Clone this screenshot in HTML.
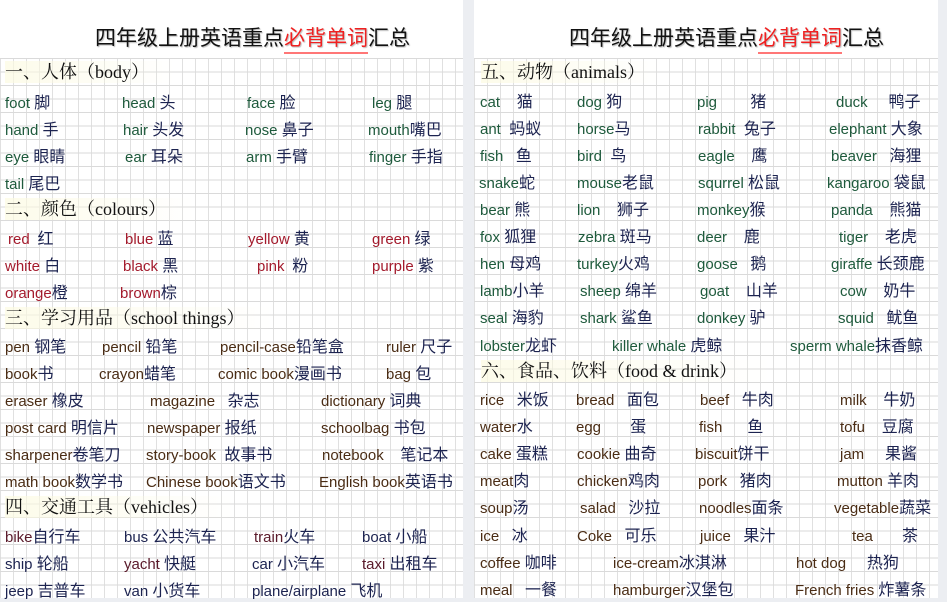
<!DOCTYPE html>
<html><head><meta charset="utf-8"><style>
body{margin:0;width:947px;height:588px;overflow:hidden;background:#eceef2;position:relative;font-family:"Liberation Sans","Noto Sans CJK SC",sans-serif}
.pg{position:absolute;top:0;height:588px;background:#fff}
.grid{position:absolute;top:58px;height:540px;background-color:#fff;
background-image:linear-gradient(#dadada 1px,transparent 1px),linear-gradient(90deg,#e0e0e0 1px,transparent 1px);
background-size:13px 13.5px;background-position:0 0}
.t{position:absolute;top:22px;font-size:21px;color:#111;font-family:"Noto Sans CJK SC",sans-serif;text-shadow:1px 1px 1px #bbb;white-space:nowrap}
.t b{color:#f02020;font-weight:normal;border-bottom:2px solid #f77}
.h{position:absolute;font-size:18px;color:#111;font-family:"Liberation Serif","Noto Serif CJK SC",serif;white-space:nowrap;line-height:22px;background:linear-gradient(90deg,rgba(252,250,225,.7),rgba(255,255,255,0))}
.w{position:absolute;font-size:15px;line-height:20px;white-space:nowrap}
.w i{font-style:normal;color:#1c2350;font-size:16px;font-family:"Noto Sans CJK SC",sans-serif}
.g{color:#1e5a3c}.r{color:#a31a2c}.b{color:#4a2c14}.m{color:#5a1a2a}.n{color:#1c2350}
</style></head><body>
<div class="pg" style="left:0;width:463px"></div>
<div class="grid" style="left:0;width:463px"></div>
<div class="pg" style="left:474px;width:464px"></div>
<div class="grid" style="left:474px;width:464px"></div>

<div class="t" style="left:95px">四年级上册英语重点<b>必背单词</b>汇总</div>
<div class="t" style="left:569px">四年级上册英语重点<b>必背单词</b>汇总</div>

<div class="h" style="left:5px;top:61px;width:170px">一、人体（body）</div>
<div class="w g" style="left:5px;top:91px">foot <i>脚</i></div>
<div class="w g" style="left:122px;top:91px">head <i>头</i></div>
<div class="w g" style="left:247px;top:91px">face <i>脸</i></div>
<div class="w g" style="left:372px;top:91px">leg <i>腿</i></div>
<div class="w g" style="left:5px;top:118px">hand <i>手</i></div>
<div class="w g" style="left:123px;top:118px">hair <i>头发</i></div>
<div class="w g" style="left:245px;top:118px">nose <i>鼻子</i></div>
<div class="w g" style="left:368px;top:118px">mouth<i>嘴巴</i></div>
<div class="w g" style="left:5px;top:145px">eye <i>眼睛</i></div>
<div class="w g" style="left:125px;top:145px">ear <i>耳朵</i></div>
<div class="w g" style="left:246px;top:145px">arm <i>手臂</i></div>
<div class="w g" style="left:369px;top:145px">finger <i>手指</i></div>
<div class="w g" style="left:5px;top:172px">tail <i>尾巴</i></div>

<div class="h" style="left:5px;top:198px;width:190px">二、颜色（colours）</div>
<div class="w r" style="left:8px;top:227px">red <i>&nbsp;红</i></div>
<div class="w r" style="left:125px;top:227px">blue <i>蓝</i></div>
<div class="w r" style="left:248px;top:227px">yellow <i>黄</i></div>
<div class="w r" style="left:372px;top:227px">green <i>绿</i></div>
<div class="w r" style="left:5px;top:254px">white <i>白</i></div>
<div class="w r" style="left:123px;top:254px">black <i>黑</i></div>
<div class="w r" style="left:257px;top:254px">pink <i>&nbsp;粉</i></div>
<div class="w r" style="left:372px;top:254px">purple <i>紫</i></div>
<div class="w r" style="left:5px;top:281px">orange<i>橙</i></div>
<div class="w r" style="left:120px;top:281px">brown<i>棕</i></div>

<div class="h" style="left:5px;top:307px;width:270px">三、学习用品（school things）</div>
<div class="w b" style="left:5px;top:335px">pen <i>钢笔</i></div>
<div class="w b" style="left:102px;top:335px">pencil <i>铅笔</i></div>
<div class="w b" style="left:220px;top:335px">pencil-case<i>铅笔盒</i></div>
<div class="w b" style="left:386px;top:335px">ruler <i>尺子</i></div>
<div class="w b" style="left:5px;top:362px">book<i>书</i></div>
<div class="w b" style="left:99px;top:362px">crayon<i>蜡笔</i></div>
<div class="w b" style="left:218px;top:362px">comic book<i>漫画书</i></div>
<div class="w b" style="left:386px;top:362px">bag <i>包</i></div>
<div class="w b" style="left:5px;top:389px">eraser <i>橡皮</i></div>
<div class="w b" style="left:150px;top:389px">magazine&nbsp;&nbsp; <i>杂志</i></div>
<div class="w b" style="left:321px;top:389px">dictionary <i>词典</i></div>
<div class="w b" style="left:5px;top:416px">post card <i>明信片</i></div>
<div class="w b" style="left:147px;top:416px">newspaper <i>报纸</i></div>
<div class="w b" style="left:321px;top:416px">schoolbag <i>书包</i></div>
<div class="w b" style="left:5px;top:443px">sharpener<i>卷笔刀</i></div>
<div class="w b" style="left:146px;top:443px">story-book&nbsp; <i>故事书</i></div>
<div class="w b" style="left:322px;top:443px">notebook&nbsp;&nbsp;&nbsp; <i>笔记本</i></div>
<div class="w b" style="left:5px;top:470px">math book<i>数学书</i></div>
<div class="w b" style="left:146px;top:470px">Chinese book<i>语文书</i></div>
<div class="w b" style="left:319px;top:470px">English book<i>英语书</i></div>

<div class="h" style="left:5px;top:496px;width:230px">四、交通工具（vehicles）</div>
<div class="w m" style="left:5px;top:525px">bike<i>自行车</i></div>
<div class="w n" style="left:124px;top:525px">bus <i>公共汽车</i></div>
<div class="w m" style="left:254px;top:525px">train<i>火车</i></div>
<div class="w n" style="left:362px;top:525px">boat <i>小船</i></div>
<div class="w n" style="left:5px;top:552px">ship <i>轮船</i></div>
<div class="w m" style="left:124px;top:552px">yacht <i>快艇</i></div>
<div class="w n" style="left:252px;top:552px">car <i>小汽车</i></div>
<div class="w m" style="left:362px;top:552px">taxi <i>出租车</i></div>
<div class="w n" style="left:5px;top:579px">jeep <i>吉普车</i></div>
<div class="w n" style="left:124px;top:579px">van <i>小货车</i></div>
<div class="w n" style="left:252px;top:579px">plane/airplane <i>飞机</i></div>

<div class="h" style="left:481px;top:61px;width:180px">五、动物（animals）</div>
<div class="w g" style="left:480px;top:90px">cat&nbsp;&nbsp;&nbsp; <i>猫</i></div>
<div class="w g" style="left:577px;top:90px">dog <i>狗</i></div>
<div class="w g" style="left:697px;top:90px">pig&nbsp;&nbsp;&nbsp;&nbsp;&nbsp;&nbsp;&nbsp; <i>猪</i></div>
<div class="w g" style="left:836px;top:90px">duck&nbsp;&nbsp;&nbsp;&nbsp; <i>鸭子</i></div>
<div class="w g" style="left:480px;top:117px">ant&nbsp; <i>蚂蚁</i></div>
<div class="w g" style="left:577px;top:117px">horse<i>马</i></div>
<div class="w g" style="left:698px;top:117px">rabbit&nbsp; <i>兔子</i></div>
<div class="w g" style="left:829px;top:117px">elephant <i>大象</i></div>
<div class="w g" style="left:480px;top:144px">fish&nbsp;&nbsp; <i>鱼</i></div>
<div class="w g" style="left:577px;top:144px">bird&nbsp; <i>鸟</i></div>
<div class="w g" style="left:698px;top:144px">eagle&nbsp;&nbsp;&nbsp; <i>鹰</i></div>
<div class="w g" style="left:831px;top:144px">beaver&nbsp;&nbsp; <i>海狸</i></div>
<div class="w g" style="left:479px;top:171px">snake<i>蛇</i></div>
<div class="w g" style="left:577px;top:171px">mouse<i>老鼠</i></div>
<div class="w g" style="left:698px;top:171px">squrrel <i>松鼠</i></div>
<div class="w g" style="left:827px;top:171px">kangaroo <i>袋鼠</i></div>
<div class="w g" style="left:480px;top:198px">bear <i>熊</i></div>
<div class="w g" style="left:577px;top:198px">lion&nbsp;&nbsp;&nbsp; <i>狮子</i></div>
<div class="w g" style="left:697px;top:198px">monkey<i>猴</i></div>
<div class="w g" style="left:831px;top:198px">panda&nbsp;&nbsp;&nbsp; <i>熊猫</i></div>
<div class="w g" style="left:480px;top:225px">fox <i>狐狸</i></div>
<div class="w g" style="left:578px;top:225px">zebra <i>斑马</i></div>
<div class="w g" style="left:697px;top:225px">deer&nbsp;&nbsp;&nbsp; <i>鹿</i></div>
<div class="w g" style="left:839px;top:225px">tiger&nbsp;&nbsp;&nbsp; <i>老虎</i></div>
<div class="w g" style="left:480px;top:252px">hen <i>母鸡</i></div>
<div class="w g" style="left:577px;top:252px">turkey<i>火鸡</i></div>
<div class="w g" style="left:697px;top:252px">goose&nbsp;&nbsp; <i>鹅</i></div>
<div class="w g" style="left:831px;top:252px">giraffe <i>长颈鹿</i></div>
<div class="w g" style="left:480px;top:279px">lamb<i>小羊</i></div>
<div class="w g" style="left:580px;top:279px">sheep <i>绵羊</i></div>
<div class="w g" style="left:700px;top:279px">goat&nbsp;&nbsp;&nbsp; <i>山羊</i></div>
<div class="w g" style="left:840px;top:279px">cow&nbsp;&nbsp;&nbsp; <i>奶牛</i></div>
<div class="w g" style="left:480px;top:306px">seal <i>海豹</i></div>
<div class="w g" style="left:580px;top:306px">shark <i>鲨鱼</i></div>
<div class="w g" style="left:697px;top:306px">donkey <i>驴</i></div>
<div class="w g" style="left:838px;top:306px">squid&nbsp;&nbsp; <i>鱿鱼</i></div>
<div class="w g" style="left:480px;top:334px">lobster<i>龙虾</i></div>
<div class="w g" style="left:612px;top:334px">killer whale <i>虎鲸</i></div>
<div class="w g" style="left:790px;top:334px">sperm whale<i>抹香鲸</i></div>

<div class="h" style="left:481px;top:360px;width:290px">六、食品、饮料（food &amp; drink）</div>
<div class="w b" style="left:480px;top:388px">rice&nbsp;&nbsp; <i>米饭</i></div>
<div class="w b" style="left:576px;top:388px">bread&nbsp;&nbsp; <i>面包</i></div>
<div class="w b" style="left:700px;top:388px">beef&nbsp;&nbsp; <i>牛肉</i></div>
<div class="w b" style="left:840px;top:388px">milk&nbsp;&nbsp;&nbsp; <i>牛奶</i></div>
<div class="w b" style="left:480px;top:415px">water<i>水</i></div>
<div class="w b" style="left:576px;top:415px">egg&nbsp;&nbsp;&nbsp;&nbsp;&nbsp;&nbsp; <i>蛋</i></div>
<div class="w b" style="left:699px;top:415px">fish&nbsp;&nbsp;&nbsp;&nbsp;&nbsp; <i>鱼</i></div>
<div class="w b" style="left:840px;top:415px">tofu&nbsp;&nbsp;&nbsp; <i>豆腐</i></div>
<div class="w b" style="left:480px;top:442px">cake <i>蛋糕</i></div>
<div class="w b" style="left:577px;top:442px">cookie <i>曲奇</i></div>
<div class="w b" style="left:695px;top:442px">biscuit<i>饼干</i></div>
<div class="w b" style="left:840px;top:442px">jam&nbsp;&nbsp;&nbsp;&nbsp; <i>果酱</i></div>
<div class="w b" style="left:480px;top:469px">meat<i>肉</i></div>
<div class="w b" style="left:577px;top:469px">chicken<i>鸡肉</i></div>
<div class="w b" style="left:698px;top:469px">pork&nbsp;&nbsp; <i>猪肉</i></div>
<div class="w b" style="left:837px;top:469px">mutton <i>羊肉</i></div>
<div class="w b" style="left:480px;top:496px">soup<i>汤</i></div>
<div class="w b" style="left:580px;top:496px">salad&nbsp;&nbsp; <i>沙拉</i></div>
<div class="w b" style="left:699px;top:496px">noodles<i>面条</i></div>
<div class="w b" style="left:834px;top:496px">vegetable<i>蔬菜</i></div>
<div class="w b" style="left:480px;top:524px">ice&nbsp;&nbsp; <i>冰</i></div>
<div class="w b" style="left:577px;top:524px">Coke&nbsp;&nbsp; <i>可乐</i></div>
<div class="w b" style="left:700px;top:524px">juice&nbsp;&nbsp; <i>果汁</i></div>
<div class="w b" style="left:852px;top:524px">tea&nbsp;&nbsp;&nbsp;&nbsp;&nbsp;&nbsp; <i>茶</i></div>
<div class="w b" style="left:480px;top:551px">coffee <i>咖啡</i></div>
<div class="w b" style="left:613px;top:551px">ice-cream<i>冰淇淋</i></div>
<div class="w b" style="left:796px;top:551px">hot dog&nbsp;&nbsp;&nbsp;&nbsp; <i>热狗</i></div>
<div class="w b" style="left:480px;top:578px">meal&nbsp;&nbsp; <i>一餐</i></div>
<div class="w b" style="left:613px;top:578px">hamburger<i>汉堡包</i></div>
<div class="w b" style="left:795px;top:578px">French fries <i>炸薯条</i></div>
</body></html>
